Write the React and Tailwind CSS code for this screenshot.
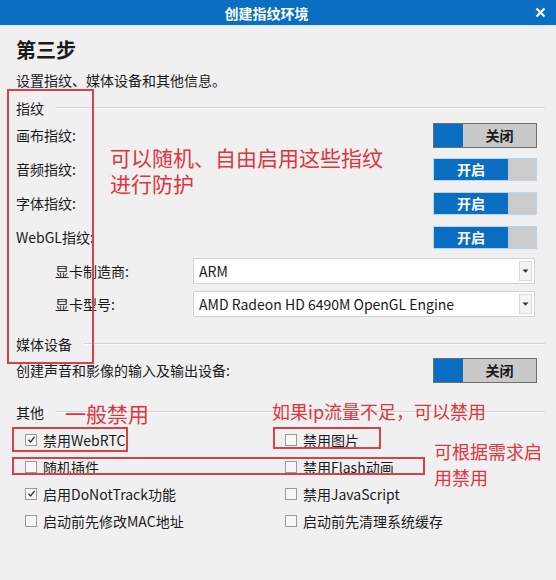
import React from "react";

function Toggle({ on }) {
  if (on) {
    return (
      <div className="flex w-[104px] h-[23px] border border-[#b9d6ef]">
        <div className="w-[74px] bg-[#0a6fc2] flex items-center justify-center text-white font-bold text-[14px] leading-none">
          开启
        </div>
        <div className="flex-1 bg-[#cbcbcb]"></div>
      </div>
    );
  }
  return (
    <div className="flex w-[104px] h-[25px] border border-[#6e6e6e]">
      <div className="w-[29px] bg-[#0a6fc2]"></div>
      <div className="flex-1 bg-[#c9c9c9] flex items-center justify-center text-[#1a1a1a] font-bold text-[14px] leading-none">
        关闭
      </div>
    </div>
  );
}

function SectionHeader({ label, className }) {
  return (
    <div className={"flex items-center gap-3 pr-[11px] h-[20px] " + (className || "")}>
      <span className="text-[14px] leading-[20px]">{label}</span>
      <div className="flex-1 h-0 border-t border-[#d2d2d2] border-b border-b-[#fafafa]"></div>
    </div>
  );
}

function Check({ checked, label }) {
  return (
    <div className="flex items-center h-[27px] gap-[6px]">
      <div className="w-[12px] h-[12px] border border-[#9a9a9a] bg-[#f7f7f7] flex items-center justify-center">
        {checked && (
          <svg width="9" height="9" viewBox="0 0 9 9">
            <path d="M1.5 4.8 L3.6 7 L7.6 1.8" fill="none" stroke="#333" strokeWidth="1.3" />
          </svg>
        )}
      </div>
      <span className="text-[14px] leading-[20px]">{label}</span>
    </div>
  );
}

function Select({ value }) {
  return (
    <div className="w-[342px] h-[26px] bg-white border border-[#d3d3d3] flex items-center">
      <span className="flex-1 pl-[5px] text-[14px] leading-[20px]">{value}</span>
      <div className="w-[13px] h-[20px] mr-[2px] border border-[#dadada] bg-[#f4f4f4] flex items-center justify-center">
        <svg width="7" height="4" viewBox="0 0 7 4">
          <path d="M0.5 0.5 L6.5 0.5 L3.5 3.8 Z" fill="#333" />
        </svg>
      </div>
    </div>
  );
}

export default function App() {
  return (
    <div className="relative w-[556px] h-[580px] bg-[#f0f0f0] overflow-hidden text-[#1a1a1a] font-['Noto_Sans_CJK_SC',sans-serif]">
      {/* title bar */}
      <div className="h-[25px] bg-[#0a6fc2] grid grid-cols-[1fr_auto_1fr] items-center text-white">
        <div></div>
        <span className="text-[14px] font-bold leading-none pr-[23px]">创建指纹环境</span>
        <div className="flex justify-end pr-[10px]">
          <svg width="11" height="11" viewBox="0 0 11 11">
            <path d="M1.5 1.5 L9.5 9.5 M9.5 1.5 L1.5 9.5" stroke="white" strokeWidth="2.2" />
          </svg>
        </div>
      </div>
      <div className="h-[3px] bg-[#e3ecf4]"></div>

      <div className="pl-[16px]">
        <div className="mt-[10px] text-[20px] font-bold leading-[24px]">第三步</div>
        <div className="mt-[8px] text-[14px] leading-[20px]">设置指纹、媒体设备和其他信息。</div>

        <SectionHeader label="指纹" className="mt-[8px]" />

        {[
          ["画布指纹:", false],
          ["音频指纹:", true],
          ["字体指纹:", true],
          ["WebGL指纹:", true],
        ].map(([l, on]) => (
          <div key={l} className="h-[34px] flex items-center justify-between pr-[19px]">
            <span className="text-[14px] leading-[20px]">{l}</span>
            <Toggle on={on} />
          </div>
        ))}

        {[
          ["显卡制造商:", "ARM"],
          ["显卡型号:", "AMD Radeon HD 6490M OpenGL Engine"],
        ].map(([l, v]) => (
          <div key={l} className="h-[33px] flex items-center pl-[39px]">
            <span className="w-[138px] text-[14px] leading-[20px]">{l}</span>
            <Select value={v} />
          </div>
        ))}

        <SectionHeader label="媒体设备" className="mt-[14px]" />

        <div className="mt-[3px] h-[26px] flex items-center justify-between pr-[19px]">
          <span className="text-[14px] leading-[20px]">创建声音和影像的输入及输出设备:</span>
          <Toggle on={false} />
        </div>

        <SectionHeader label="其他" className="mt-[19px]" />

        <div className="mt-[4px] pl-[9px] grid grid-cols-[260px_1fr]">
          <Check checked label="禁用WebRTC" />
          <Check label="禁用图片" />
          <Check label="随机插件" />
          <Check label="禁用Flash动画" />
          <Check checked label="启用DoNotTrack功能" />
          <Check label="禁用JavaScript" />
          <Check label="启动前先修改MAC地址" />
          <Check label="启动前先清理系统缓存" />
        </div>
      </div>

      {/* annotations */}
      <div className="absolute left-[7px] top-[89px] w-[87px] h-[275px] border-2 border-[#d8414b]"></div>
      <div className="absolute left-[110px] top-[144px] text-[21px] leading-[26px] text-[#e0343e]">
        <div>可以随机、自由启用这些指纹</div>
        <div>进行防护</div>
      </div>
      <div className="absolute left-[65px] top-[399px] text-[21px] leading-[28px] text-[#e0343e]">
        一般禁用
      </div>
      <div className="absolute left-[272px] top-[398px] text-[18px] leading-[26px] text-[#e0343e]">
        如果ip流量不足，可以禁用
      </div>
      <div className="absolute left-[434px] top-[438px] text-[18px] leading-[26px] text-[#e0343e]">
        <div>可根据需求启</div>
        <div>用禁用</div>
      </div>
      <div className="absolute left-[12px] top-[427px] w-[116px] h-[25px] border-2 border-[#d8414b]"></div>
      <div className="absolute left-[273px] top-[427px] w-[108px] h-[22px] border-2 border-[#d8414b]"></div>
      <div className="absolute left-[12px] top-[457px] w-[413px] h-[18px] border-2 border-[#d8414b]"></div>
    </div>
  );
}
